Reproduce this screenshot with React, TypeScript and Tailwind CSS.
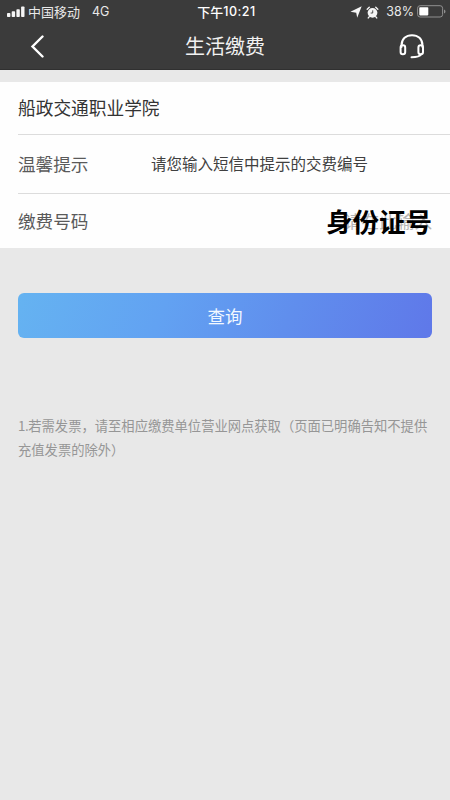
function StatusBar() {
  return (
    <div className="flex h-6 items-center text-[13px] leading-6 text-[#e9e9e9]">
      <div className="flex flex-1 items-center pl-[7px]">
        <svg width="18" height="12" viewBox="0 0 18 12" fill="#f5f5f5" className="-mt-px">
          <rect x="0" y="7" width="3.4" height="4" rx="0.8" />
          <rect x="4.7" y="5.3" width="3.4" height="5.7" rx="0.8" />
          <rect x="9.4" y="3.2" width="3.4" height="7.8" rx="0.8" />
          <rect x="14.1" y="0.5" width="3.4" height="10.5" rx="0.8" />
        </svg>
        <span className="ml-[3px] -mt-px">中国移动</span>
        <span className="ml-3 font-['Inter','Liberation_Sans',sans-serif] text-[12.5px]">4G</span>
      </div>
      <div className="flex items-center font-medium text-white">
        <span className="-mt-px">下午</span>
        <span className="font-['Inter','Liberation_Sans',sans-serif] text-[12.5px] tracking-[0.5px]">10:21</span>
      </div>
      <div className="flex flex-1 items-center justify-end pr-[4px]">
        <svg width="12" height="12" viewBox="0 0 11 11" fill="#f5f5f5">
          <path d="M10.7.3 6.6 10.7 5.7 6.1.4 5.3z" />
        </svg>
        <svg width="13" height="13" viewBox="0 0 12 12" className="ml-1">
          <path d="M1.1 2.9 3 1.1M10.9 2.9 9 1.1M2.9 10 2.1 11M9.1 10l.8 1" stroke="#f5f5f5" strokeWidth="1.3" strokeLinecap="round" />
          <circle cx="6" cy="6.3" r="4.5" fill="#f5f5f5" />
          <path d="M6.2 4v2.5H4.3" fill="none" stroke="#3b3b3b" strokeWidth="0.8" />
        </svg>
        <span className="ml-[7px] font-['Inter','Liberation_Sans',sans-serif] text-[12.5px]">38%</span>
        <svg width="29" height="13" viewBox="0 0 29 13" className="ml-[3px] -mt-px">
          <rect x=".6" y=".7" width="25" height="11.3" rx="2.5" fill="none" stroke="#909090" />
          <rect x="2.3" y="2.3" width="9" height="8.1" rx=".8" fill="#fff" />
          <path d="M27 4.5c2 .7 2 3.3 0 4z" fill="#909090" />
        </svg>
      </div>
    </div>
  );
}

function TitleBar() {
  return (
    <div className="flex h-[43px] items-center justify-between pr-[25px] pl-[30px]">
      <svg width="16" height="24" viewBox="0 0 16 24" fill="none" stroke="#fff" strokeWidth="2.4" strokeLinecap="round">
        <path d="M12.5 2.5 2.5 12.5l10 10" />
      </svg>
      <h1 className="pl-[5px] text-[20px] leading-[43px] text-[#f1f1f1]">生活缴费</h1>
      <svg width="26" height="26" viewBox="0 0 26 26" fill="none" stroke="#fff" strokeWidth="2" strokeLinecap="round">
        <path d="M2.5 14v-1.5C2.5 5.8 7 2.2 13 2.2s10.5 3.6 10.5 10.3V14" />
        <rect x="1.6" y="12.3" width="4.6" height="9" rx="2.2" />
        <rect x="19.4" y="12.3" width="4.6" height="9" rx="2.2" />
        <path d="M22.3 21.2c-1.3 2.1-4.5 3-9.8 3" />
      </svg>
    </div>
  );
}

export default function App() {
  return (
    <div className="flex h-[800px] w-[450px] flex-col overflow-hidden bg-[#e8e8e8] font-['Noto_Sans_CJK_SC',sans-serif]">
      <header className="h-[70px] shrink-0 border-b border-[#303030] bg-[#3b3b3b]">
        <StatusBar />
        <TitleBar />
      </header>

      <section className="mt-3 h-[166px] shrink-0 bg-[#fefefe] pl-[18px]">
        <div className="h-[53px] border-b border-[#dcdcdc] text-[17.7px] leading-[50px] text-[#333]">船政交通职业学院</div>
        <div className="flex h-[59px] items-center border-b border-[#dcdcdc]">
          <span className="w-[133px] text-[17.6px] leading-[58px] text-[#5a5a5a]">温馨提示</span>
          <span className="-mt-0.5 text-[15.5px] leading-[56px] text-[#404040]">请您输入短信中提示的交费编号</span>
        </div>
        <div className="flex h-[54px] items-center justify-between pr-[18px]">
          <span className="text-[17.6px] leading-[54px] text-[#5a5a5a]">缴费号码</span>
          <div className="relative text-[17.6px] leading-[54px] text-[#b5b5b5]">
            请在此输入
            <span className="absolute right-0 top-0 text-[26.5px] leading-[54px] font-bold whitespace-nowrap text-black">身份证号</span>
          </div>
        </div>
      </section>

      <button className="mx-[18px] mt-[45px] h-[45px] shrink-0 rounded-md bg-[linear-gradient(110deg,#65b3f1_0%,#62a2f2_35%,#608eed_65%,#5f78e9_100%)] text-[17.5px] leading-[45px] text-[#f2f8ff]">
        查询
      </button>

      <p className="mt-[76px] ml-[18px] text-[13.3px] leading-6 whitespace-nowrap text-[#969696]">
        <span className="-tracking-[0.4px]">1.</span>若需发票，请至相应缴费单位营业网点获取（页面已明确告知不提供
        <br />
        充值发票的除外）
      </p>
    </div>
  );
}
